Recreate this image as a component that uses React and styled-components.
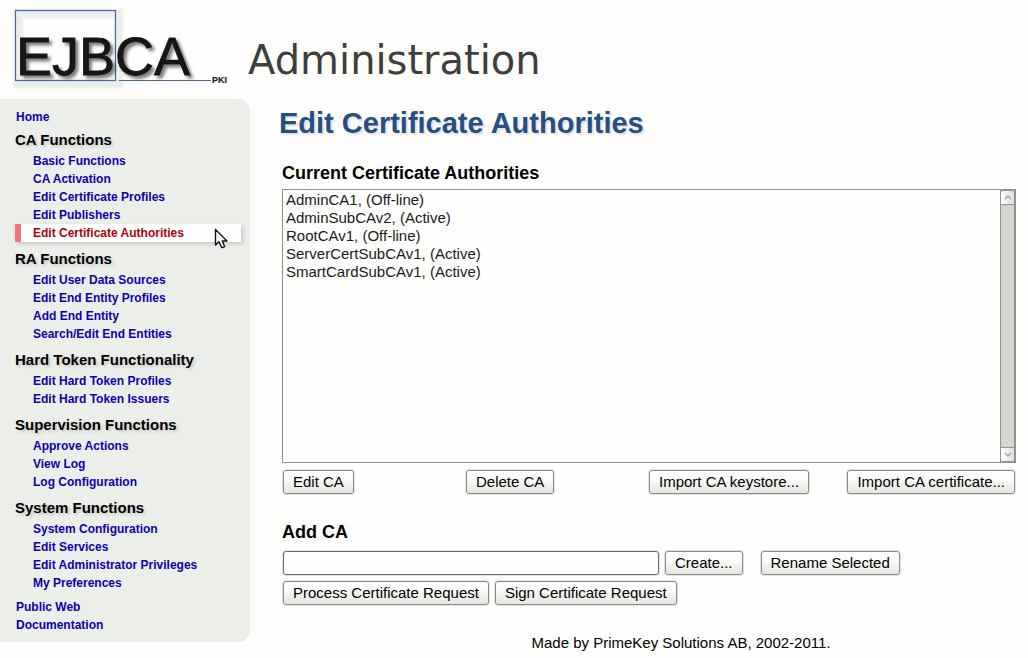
import React from 'react';
import styled, { createGlobalStyle, css } from 'styled-components';

const GlobalStyle = createGlobalStyle`
  * {
    box-sizing: border-box;
  }

  body {
    margin: 0;
    background: #fefefc;
    color: #000;
    font-family: "Liberation Sans", Arial, Helvetica, sans-serif;
    font-size: 15px;
  }
`;

const Header = styled.header`
  display: flex;
  align-items: flex-start;
  height: 99px;
`;

const Logo = styled.svg`
  flex: none;
  width: 248px;
  height: 99px;
`;

const AppName = styled.div`
  padding-top: 36px;
  font-family: "DejaVu Sans", Verdana, sans-serif;
  font-size: 40px;
  line-height: 48px;
  color: #3e3e3c;
`;

const Layout = styled.div`
  display: flex;
  align-items: flex-start;
`;

const Sidebar = styled.nav`
  flex: none;
  width: 250px;
  padding: 9px 9px 8px 15px;
  background: #eceeea;
  border-radius: 0 12px 12px 0;
  font-size: 12px;
  font-weight: bold;
  line-height: 18px;
`;

const MenuList = styled.ul`
  margin: 0;
  padding: 0;
  list-style: none;
`;

const MenuGroup = styled.section`
  margin-top: ${props => (props.$first ? '5px' : '8px')};
`;

const MenuTitle = styled.h2`
  margin: 0 0 3px;
  font-size: 15px;
  line-height: 18px;
  text-shadow: 2px 2px 3px rgba(0, 0, 0, 0.16);
`;

const MenuItem = styled.li`
  position: relative;
  padding-left: ${props => (props.$nested ? '18px' : '1px')};

  ${props => props.$active && css`
    padding-left: 12px;
    border-left: 6px solid #f07878;
    background: #fefefe;
    box-shadow: 2px 2px 4px rgba(0, 0, 0, 0.16);
  `}
`;

const MenuLink = styled.a`
  color: ${props => (props.$active ? '#b00010' : '#0c00b0')};
  text-decoration: none;
`;

const BottomLinks = styled(MenuList)`
  margin-top: 6px;
`;

const Pointer = styled.svg`
  position: absolute;
  top: 4px;
  right: 12px;
  width: 15px;
  height: 22px;
  pointer-events: none;
`;

const Main = styled.main`
  flex: 1;
  min-width: 0;
  padding: 6px 12px 0 29px;
`;

const PageTitle = styled.h1`
  margin: 0;
  font-size: 29px;
  line-height: 36px;
  color: #254e85;
  text-shadow: 2px 2px 2px rgba(0, 0, 0, 0.12);
`;

const Panel = styled.div`
  padding-left: 3px;
`;

const SectionTitle = styled.h2`
  margin: ${props => (props.$spaced ? '26px 0 7px' : '20px 0 4px')};
  font-size: 18px;
  line-height: 24px;
`;

const ListFrame = styled.div`
  display: flex;
  height: 274px;
  border: 1px solid #93908e;
  border-right-width: 2px;
`;

const CaList = styled.select`
  flex: 1;
  min-width: 0;
  padding: 1px 0;
  border: 0;
  outline: 0;
  background: #fefefc;
  color: #1a1a1a;
  font: inherit;
  overflow: hidden;

  option {
    height: 18px;
    min-height: 18px;
    padding: 0 3px;
    line-height: 18px;
  }
`;

const ScrollTrack = styled.div`
  display: flex;
  flex-direction: column;
  justify-content: space-between;
  width: 14px;
  border-left: 1px solid #93908e;
  background: #d9d3d1;
`;

const ScrollButton = styled.button`
  display: flex;
  align-items: center;
  justify-content: center;
  height: 15px;
  padding: 0;
  border: solid #93908e;
  border-width: 1px 0;
  border-radius: ${props => (props.$down ? '0 0 3px 3px' : '3px 3px 0 0')};
  background: linear-gradient(to right, #fefefe, #e0e2de);
`;

const Button = styled.button`
  height: 24px;
  padding: 0 9px;
  border: 1px solid #8f8a88;
  border-radius: 3px;
  background: linear-gradient(#fefefe 0%, #fafbf9 45%, #f0f3ee 55%, #e6e9e3 100%);
  box-shadow: 0 0 0 1px #e4e1df;
  color: #000;
  font: inherit;
  line-height: 20px;
  white-space: nowrap;
`;

const ActionGrid = styled.div`
  display: grid;
  grid-template-columns: repeat(4, 1fr);
  justify-items: start;
  padding: 7px 1px 0;

  > :last-child {
    justify-self: end;
  }
`;

const FormRow = styled.div`
  display: flex;
  gap: 6px;
  margin-bottom: 6px;
  padding-left: 1px;
`;

const NameInput = styled.input`
  flex: 0 1 376px;
  min-width: 0;
  height: 24px;
  padding: 0 4px;
  border: 1px solid #6e6a69;
  border-radius: 3px;
  outline: 0;
  background: #fefefc;
  box-shadow: 0 0 0 1px #e4e1df;
  font: inherit;
`;

const RenameButton = styled(Button)`
  margin-left: 12px;
`;

const Footer = styled.footer`
  padding: 23px 0 6px 67px;
  line-height: 18px;
  text-align: center;
`;

const menuGroups = [
  {
    title: 'CA Functions',
    items: [
      'Basic Functions',
      'CA Activation',
      'Edit Certificate Profiles',
      'Edit Publishers',
      'Edit Certificate Authorities',
    ],
  },
  {
    title: 'RA Functions',
    items: [
      'Edit User Data Sources',
      'Edit End Entity Profiles',
      'Add End Entity',
      'Search/Edit End Entities',
    ],
  },
  {
    title: 'Hard Token Functionality',
    items: ['Edit Hard Token Profiles', 'Edit Hard Token Issuers'],
  },
  {
    title: 'Supervision Functions',
    items: ['Approve Actions', 'View Log', 'Log Configuration'],
  },
  {
    title: 'System Functions',
    items: [
      'System Configuration',
      'Edit Services',
      'Edit Administrator Privileges',
      'My Preferences',
    ],
  },
];

const authorities = [
  'AdminCA1, (Off-line)',
  'AdminSubCAv2, (Active)',
  'RootCAv1, (Off-line)',
  'ServerCertSubCAv1, (Active)',
  'SmartCardSubCAv1, (Active)',
];

const activeItem = 'Edit Certificate Authorities';

const EjbcaLogo = () => (
  <Logo viewBox="0 0 248 99" role="img" aria-label="EJBCA PKI">
    <defs>
      <filter id="soft" x="-20%" y="-20%" width="140%" height="140%">
        <feGaussianBlur stdDeviation="1" />
      </filter>
      <filter id="drop" x="-10%" y="-20%" width="120%" height="150%">
        <feDropShadow dx="3" dy="3" stdDeviation="1.6" floodColor="#000" floodOpacity="0.5" />
      </filter>
    </defs>
    <rect x="18.5" y="13.5" width="100" height="70" fill="none" stroke="#eceeea" strokeWidth="9" filter="url(#soft)" />
    <rect x="15.5" y="10.5" width="100" height="70" fill="none" stroke="#4a66ac" strokeWidth="1.2" />
    <path d="M119 80.5H211" stroke="#4a66ac" />
    <text x="16" y="75" fontFamily="Liberation Sans, Arial, sans-serif" fontSize="54" fill="#141412" stroke="#141412" strokeWidth="0.8" filter="url(#drop)">EJBCA</text>
    <text x="212" y="83" fontFamily="Liberation Sans, Arial, sans-serif" fontSize="9" fontWeight="bold" fill="#222" stroke="#222" strokeWidth="0.2">PKI</text>
  </Logo>
);

const Chevron = ({ down }) => (
  <svg width="8" height="5" viewBox="0 0 8 5" fill="none" stroke="#a09c9a" strokeWidth="1.3" aria-hidden="true">
    <path d={down ? 'M1 1L4 4L7 1' : 'M1 4L4 1L7 4'} />
  </svg>
);

const App = () => {
  return (
    <>
      <GlobalStyle />
      <Header>
        <EjbcaLogo />
        <AppName>Administration</AppName>
      </Header>

      <Layout>
        <Sidebar>
          <MenuList>
            <MenuItem>
              <MenuLink href="#">Home</MenuLink>
            </MenuItem>
          </MenuList>
          {menuGroups.map((group, index) => (
            <MenuGroup key={group.title} $first={index === 0}>
              <MenuTitle>{group.title}</MenuTitle>
              <MenuList>
                {group.items.map(item => (
                  <MenuItem key={item} $nested $active={item === activeItem}>
                    <MenuLink href="#" $active={item === activeItem}>{item}</MenuLink>
                    {item === activeItem && (
                      <Pointer viewBox="0 0 15 22" aria-hidden="true">
                        <path
                          d="M1.5 1.5V17L5 13.8L7.6 19.3Q9 20 10.6 18.4L8.3 13H13Z"
                          fill="#fff"
                          stroke="#111"
                          strokeWidth="1.4"
                          strokeLinejoin="round"
                        />
                      </Pointer>
                    )}
                  </MenuItem>
                ))}
              </MenuList>
            </MenuGroup>
          ))}
          <BottomLinks>
            <MenuItem>
              <MenuLink href="#">Public Web</MenuLink>
            </MenuItem>
            <MenuItem>
              <MenuLink href="#">Documentation</MenuLink>
            </MenuItem>
          </BottomLinks>
        </Sidebar>

        <Main>
          <PageTitle>Edit Certificate Authorities</PageTitle>
          <Panel>
            <SectionTitle id="current-cas">Current Certificate Authorities</SectionTitle>
            <ListFrame>
              <CaList size={15} aria-labelledby="current-cas">
                {authorities.map(name => (
                  <option key={name}>{name}</option>
                ))}
              </CaList>
              <ScrollTrack>
                <ScrollButton type="button" aria-label="Scroll up">
                  <Chevron />
                </ScrollButton>
                <ScrollButton type="button" aria-label="Scroll down" $down>
                  <Chevron down />
                </ScrollButton>
              </ScrollTrack>
            </ListFrame>
            <ActionGrid>
              <Button type="button">Edit CA</Button>
              <Button type="button">Delete CA</Button>
              <Button type="button">Import CA keystore...</Button>
              <Button type="button">Import CA certificate...</Button>
            </ActionGrid>

            <SectionTitle id="add-ca" $spaced>Add CA</SectionTitle>
            <FormRow>
              <NameInput type="text" aria-labelledby="add-ca" />
              <Button type="button">Create...</Button>
              <RenameButton type="button">Rename Selected</RenameButton>
            </FormRow>
            <FormRow>
              <Button type="button">Process Certificate Request</Button>
              <Button type="button">Sign Certificate Request</Button>
            </FormRow>
          </Panel>
          <Footer>Made by PrimeKey Solutions AB, 2002-2011.</Footer>
        </Main>
      </Layout>
    </>
  );
};

export default App;
